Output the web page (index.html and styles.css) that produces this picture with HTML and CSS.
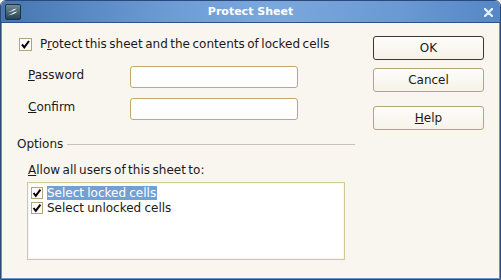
FILE: index.html
```html
<!DOCTYPE html>
<html>
<head>
<meta charset="utf-8">
<link rel="stylesheet" href="styles.css">
</head>
<body>
<div class="window">
  <div class="titlebar">
    <svg class="app-icon" width="16" height="16" viewBox="0 0 16 16">
      <defs>
        <linearGradient id="ig" x1="0" y1="0" x2="0" y2="1">
          <stop offset="0" stop-color="#6f8f9e"/>
          <stop offset="1" stop-color="#243f52"/>
        </linearGradient>
      </defs>
      <rect x="0.5" y="0.5" width="15" height="15" rx="1.5" fill="url(#ig)" stroke="#1d3344"/>
      <path d="M3 8.2 C5 7.2 7 6.6 8.5 5.2 L11.8 4.4 C10 5.6 8.5 6.8 6 7.6 Z" fill="#ffffff"/>
      <path d="M2.6 11.4 C5 10.4 7.4 9.6 9 8.2 L12.6 7.4 C10.6 8.8 8.6 10 5.6 10.8 Z" fill="#ffffff"/>
    </svg>
    <span class="title">Protect Sheet</span>
    <svg class="close" width="9" height="9" viewBox="0 0 9 9">
      <path d="M1 1 L8 8 M8 1 L1 8" stroke="#e4eefa" stroke-width="2.4" stroke-linecap="round"/>
    </svg>
  </div>
  <div class="body">
    <div class="left">
      <div class="check-row">
        <span class="cb">
          <svg width="11" height="11" viewBox="0 0 11 11"><path d="M2 5.5 L4.3 8.3 L9 2" fill="none" stroke="#000" stroke-width="2"/></svg>
        </span>
        <span class="cb-label">P<u>r</u>otect this sheet and the contents of locked cells</span>
      </div>
      <div class="field field-first">
        <span class="flabel"><u>P</u>assword</span>
        <span class="input"></span>
      </div>
      <div class="field field-next">
        <span class="flabel"><u>C</u>onfirm</span>
        <span class="input"></span>
      </div>
      <div class="group-head">
        <span>Options</span>
        <span class="rule"></span>
      </div>
      <div class="allow"><u>A</u>llow all users of this sheet to:</div>
      <div class="list">
        <div class="item">
          <span class="cb cb-small">
            <svg width="10" height="10" viewBox="0 0 10 10"><path d="M1.6 5 L3.8 7.8 L8.4 1.6" fill="none" stroke="#000" stroke-width="2"/></svg>
          </span>
          <span class="itext selected">Select locked cells</span>
        </div>
        <div class="item">
          <span class="cb cb-small">
            <svg width="10" height="10" viewBox="0 0 10 10"><path d="M1.6 5 L3.8 7.8 L8.4 1.6" fill="none" stroke="#000" stroke-width="2"/></svg>
          </span>
          <span class="itext">Select unlocked cells</span>
        </div>
      </div>
    </div>
    <div class="buttons">
      <div class="btn btn-default">OK</div>
      <div class="btn btn-cancel">Cancel</div>
      <div class="btn btn-help"><u>H</u>elp</div>
    </div>
  </div>
</div>
</body>
</html>
```

FILE: styles.css
```css
html, body {
  margin: 0;
  padding: 0;
  background: #f9f6ef;
}
body {
  font-family: "DejaVu Sans", sans-serif;
  font-size: 12px;
  color: #1a1a1a;
}
.window {
  width: 501px;
  height: 280px;
  box-sizing: border-box;
  border: 1px solid #2b4a7c;
  border-radius: 6px 6px 0 0;
  overflow: hidden;
  display: flex;
  flex-direction: column;
  background: #f9f6ef;
}
.titlebar {
  height: 21px;
  flex: none;
  border-bottom: 1px solid #2d5189;
  background: linear-gradient(to right, #4676b2 0%, #6e9dd6 35%, #7ba7dc 55%, #6a99d3 80%, #5587c6 100%);
  display: flex;
  align-items: center;
}
.app-icon {
  margin-left: 4px;
  flex: none;
}
.title {
  flex: 1;
  text-align: center;
  color: #ffffff;
  font-weight: bold;
  font-size: 11px;
  margin-right: 4px;
}
.close {
  flex: none;
  margin-right: 7px;
  margin-top: 1px;
}
.body {
  flex: 1;
  display: flex;
  border: 1px solid #6a93c9;
  border-top: none;
  padding: 0 15px 0 15px;
  background: #f9f6ef;
}
.left {
  width: 338px;
  flex: none;
  display: flex;
  flex-direction: column;
}
.check-row {
  margin-top: 14px;
  margin-left: 2px;
  height: 14px;
  display: flex;
  align-items: center;
}
.cb {
  width: 11px;
  height: 11px;
  border: 1px solid #b4a47c;
  background: #fbfaf6;
  display: flex;
  align-items: center;
  justify-content: center;
  flex: none;
}
.cb-label {
  margin-left: 8px;
  line-height: 14px;
  word-spacing: -1.3px;
  padding-bottom: 1px;
}
u {
  text-decoration: underline;
  text-underline-offset: 1px;
}
.field {
  display: flex;
  align-items: center;
  padding-left: 11px;
  height: 22px;
}
.field-first {
  margin-top: 15px;
}
.field-next {
  margin-top: 10px;
}
.flabel {
  width: 102px;
  flex: none;
  padding-bottom: 4px;
}
.input {
  width: 166px;
  height: 20px;
  border: 1px solid #c2a968;
  border-radius: 3px;
  background: #ffffff;
}
.group-head {
  margin-top: 17px;
  height: 14px;
  display: flex;
  align-items: center;
  line-height: 14px;
}
.rule {
  flex: 1;
  height: 1px;
  background: #c9c3b6;
  margin-left: 4px;
}
.allow {
  margin-top: 12px;
  padding-left: 11px;
  line-height: 14px;
  word-spacing: -1.3px;
}
.list {
  margin-top: 5px;
  margin-left: 10px;
  width: 313px;
  height: 73px;
  border: 1px solid #d8c594;
  background: #ffffff;
  box-shadow: inset 0 0 0 1px #faf7f1;
  padding: 3px 0 0 3px;
}
.item {
  display: flex;
  align-items: center;
  height: 14px;
  margin-bottom: 1px;
}
.cb-small {
  width: 10px;
  height: 10px;
}
.itext {
  margin-left: 4px;
  line-height: 14px;
  padding-right: 1px;
  word-spacing: -0.6px;
}
.selected {
  background: #729fd4;
  color: #ffffff;
}
.buttons {
  margin-left: 18px;
  width: 111px;
  flex: none;
  display: flex;
  flex-direction: column;
}
.btn {
  height: 22px;
  border: 1px solid #b8a57c;
  border-radius: 3px;
  background: linear-gradient(to bottom, #fefdfb 0%, #f6f2e8 100%);
  display: flex;
  align-items: center;
  justify-content: center;
  line-height: 14px;
}
.btn-default {
  margin-top: 13px;
  border-color: #3b372e;
}
.btn-cancel {
  margin-top: 8px;
}
.btn-help {
  margin-top: 14px;
}
```
